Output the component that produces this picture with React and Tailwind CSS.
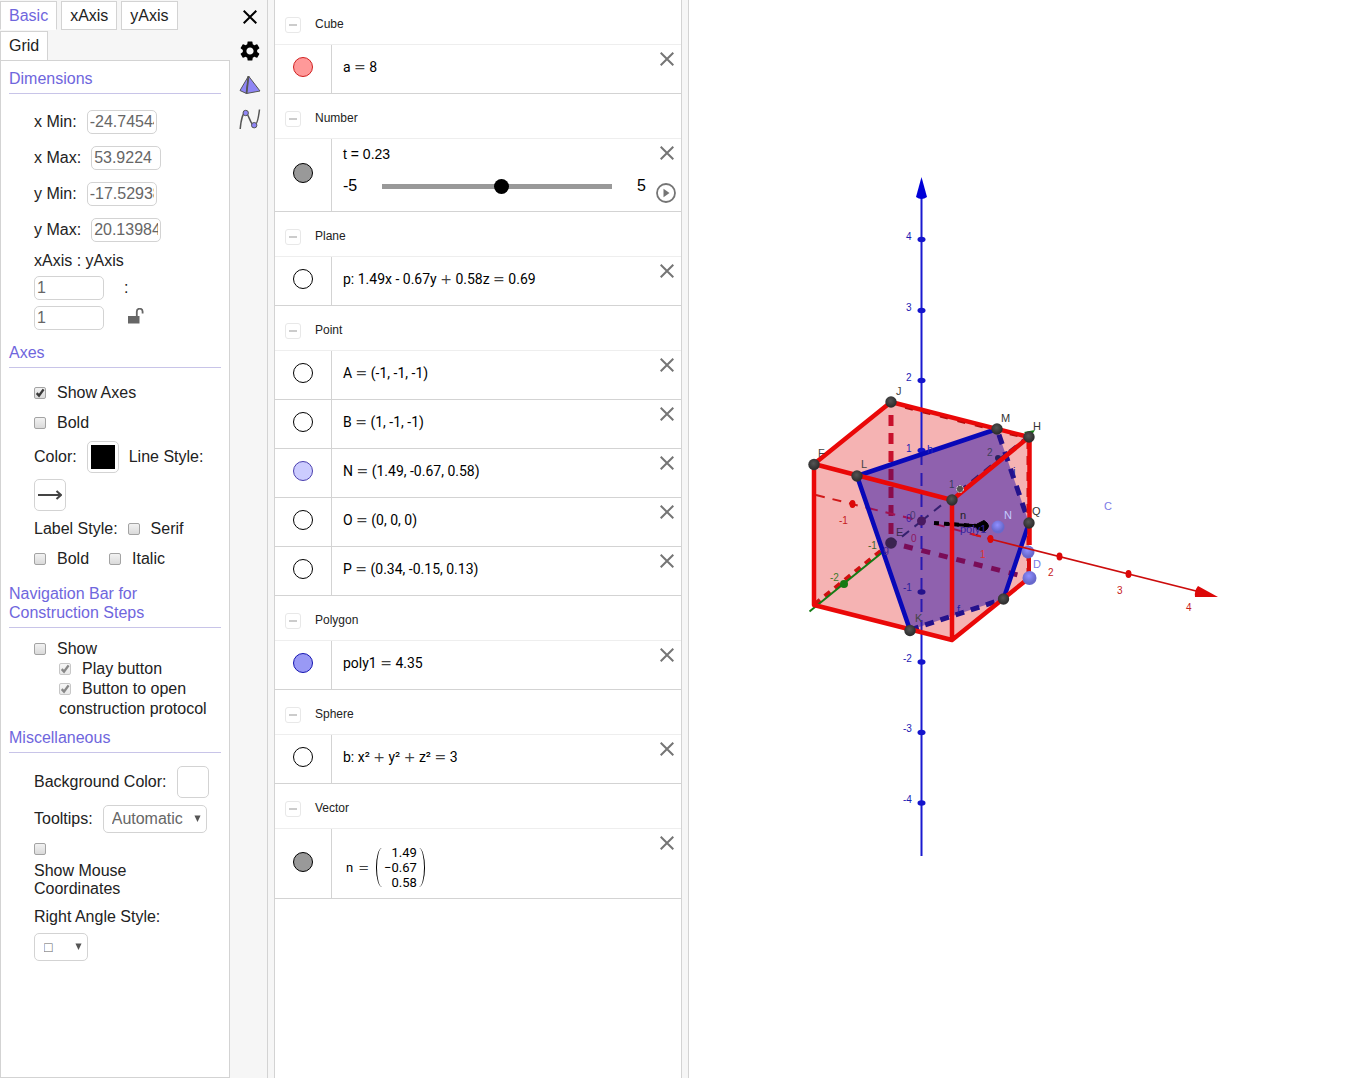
import React, { useState } from "react";
import { MdSettings } from "react-icons/md";

const MATH = "font-[Roboto,sans-serif]";

function Cross({ className, width = 2 }) {
  return (
    <svg viewBox="0 0 14 14" className={className} stroke="currentColor" strokeWidth={width} fill="none" aria-hidden="true">
      <path d="M0.7 0.7 13.3 13.3M13.3 0.7 0.7 13.3" />
    </svg>
  );
}

function Check({ id, label, defaultChecked = false, disabled = false, className = "" }) {
  return (
    <label htmlFor={id} className={`${className} inline-flex items-center gap-[11px]`}>
      <span className={`grid shrink-0 ${disabled ? "opacity-60" : ""}`}>
        <input
          id={id}
          type="checkbox"
          defaultChecked={defaultChecked}
          disabled={disabled}
          className="peer col-start-1 row-start-1 size-3 appearance-none rounded-[2px] border border-[#a3a3a3] bg-linear-to-b from-[#f2f2f2] to-[#dadada]"
        />
        <svg viewBox="0 0 12 12" className="pointer-events-none invisible col-start-1 row-start-1 size-3 peer-checked:visible" fill="none" stroke="#3a3a3a" strokeWidth="2.4" aria-hidden="true">
          <path d="M2.7 6.2 5 8.6 9.6 2.4" />
        </svg>
      </span>
      <span>{label}</span>
    </label>
  );
}

const INPUT = "h-6 w-[70px] rounded-[5px] border border-[#d3d3d3] bg-white px-[2px] text-base text-[#666] outline-none";

function Field({ id, label, value }) {
  return (
    <div className="flex items-center gap-[10px]">
      <label htmlFor={id}>{label}</label>
      <input id={id} defaultValue={value} className={INPUT} />
    </div>
  );
}

function Heading({ children }) {
  return <h2 className="border-b border-[#c8c4e8] pt-2 pb-[5px] leading-[19px] text-[#6f66dd]">{children}</h2>;
}

function Arrow() {
  return (
    <svg viewBox="0 0 8 8" className="pointer-events-none col-start-1 row-start-1 mr-[6px] mb-[2px] size-[7px] self-center justify-self-end" fill="#555" aria-hidden="true">
      <path d="M0.5 0.5h7L4 8z" />
    </svg>
  );
}

const SELECT = "col-start-1 row-start-1 h-7 appearance-none rounded-[5px] border border-[#d3d3d3] bg-white px-2 text-[#666]";
const SWATCH = "flex size-8 shrink-0 items-center justify-center rounded-[5px] border border-[#d3d3d3] bg-white";

function Settings() {
  const tabs = ["Basic", "xAxis", "yAxis", "Grid"];
  const [tab, setTab] = useState("Basic");
  return (
    <section className="flex w-[230px] shrink-0 flex-col">
      <nav className="flex flex-wrap">
        {tabs.map((t) => (
          <button
            key={t}
            type="button"
            onClick={() => setTab(t)}
            className={`${t === tab ? "border-b-white text-[#6f66dd]" : "text-[#222]"} mt-px mr-1 h-[29px] border border-[#d3d3d3] bg-white px-2 leading-5 last:border-b-0`}
          >
            {t}
          </button>
        ))}
      </nav>
      <div className="flex-1 border border-[#d3d3d3] bg-white px-2">
        <Heading>Dimensions</Heading>
        <div className="pt-4 pb-[5px] pl-[25px]">
          <div className="flex flex-col gap-3">
            <Field id="xmin" label="x Min:" value="-24.74544" />
            <Field id="xmax" label="x Max:" value="53.9224" />
            <Field id="ymin" label="y Min:" value="-17.52938" />
            <Field id="ymax" label="y Max:" value="20.13984" />
          </div>
          <label htmlFor="rx" className="mt-[9px] block leading-5">xAxis : yAxis</label>
          <div className="mt-[5px] flex items-center gap-5">
            <input id="rx" defaultValue="1" className={INPUT} />
            <span>:</span>
          </div>
          <div className="mt-[6px] flex items-center gap-6">
            <input aria-label="yAxis ratio" defaultValue="1" className={INPUT} />
            <button type="button" aria-label="Unlock ratio" className="pb-1">
              <svg viewBox="0 0 16 16" className="size-4" aria-hidden="true">
                <path d="M0 8h11.500v7.500H0z" fill="#666" />
                <path d="M8.800 8V3.600a2.900 2.900 0 0 1 5.800 0V5.600" fill="none" stroke="#666" strokeWidth="1.800" />
              </svg>
            </button>
          </div>
        </div>

        <Heading>Axes</Heading>
        <div className="pt-[10px] pb-[2px] pl-[25px]">
          <div className="flex h-[30px] items-center"><Check id="axes" label="Show Axes" defaultChecked /></div>
          <div className="flex h-[30px] items-center"><Check id="bold" label="Bold" /></div>
          <div className="flex flex-wrap items-center gap-x-[10px] gap-y-[6px] pt-[3px] pb-[3px]">
            <span>Color:</span>
            <button type="button" aria-label="Axis color" className={SWATCH}><span className="size-6 bg-black" /></button>
            <span>Line Style:</span>
            <button type="button" aria-label="Line style" className={SWATCH}>
              <svg viewBox="0 0 24 10" className="h-[10px] w-6" fill="none" stroke="#444" strokeWidth="2" aria-hidden="true">
                <path d="M0 5h23M18.500 1 23 5l-4.500 4" />
              </svg>
            </button>
          </div>
          <div className="flex h-[30px] items-center gap-[10px]"><span>Label Style:</span><Check id="serif" label="Serif" /></div>
          <div className="flex h-[30px] items-center gap-5"><Check id="lbold" label="Bold" /><Check id="italic" label="Italic" /></div>
        </div>

        <Heading>Navigation Bar for Construction Steps</Heading>
        <div className="pt-[11px] pb-px pl-[25px] leading-5">
          <Check id="show" label="Show" className="h-5 align-top" />
          <div className="pl-[25px]">
            <Check id="play" label="Play button" defaultChecked disabled className="h-5 align-top" />
            <Check id="open" label="Button to open" defaultChecked disabled className="h-5 align-top" />
            <label htmlFor="open" className="block">construction protocol</label>
          </div>
        </div>

        <Heading>Miscellaneous</Heading>
        <div className="pt-[13px] pl-[25px]">
          <div className="flex items-center gap-[10px]">
            <span className="whitespace-nowrap">Background Color:</span>
            <button type="button" aria-label="Background color" className={SWATCH} />
          </div>
          <div className="mt-[7px] flex items-center gap-[10px]">
            <label htmlFor="tips">Tooltips:</label>
            <div className="grid">
              <select id="tips" className={`${SELECT} w-[104px] text-base`}><option>Automatic</option><option>On</option><option>Off</option></select>
              <Arrow />
            </div>
          </div>
          <input id="mouse" type="checkbox" className="mt-[10px] block size-3 appearance-none rounded-[2px] border border-[#a3a3a3] bg-linear-to-b from-[#f2f2f2] to-[#dadada]" />
          <label htmlFor="mouse" className="mt-[7px] block w-[120px] leading-[18px]">Show Mouse Coordinates</label>
          <label htmlFor="angle" className="mt-[9px] block leading-5">Right Angle Style:</label>
          <div className="mt-[6px] grid w-[54px]">
            <select id="angle" className={`${SELECT} w-[54px] pl-[9px] text-sm`}><option>□</option><option>∟</option><option>•</option></select>
            <Arrow />
          </div>
        </div>
      </div>
    </section>
  );
}

function IconBar() {
  return (
    <aside className="flex w-[38px] shrink-0 flex-col items-center gap-3 border-r border-[#d3d3d3] pt-[6px] pl-[2px] text-black">
      <button type="button" aria-label="Close" className="flex size-[22px] items-center justify-center"><Cross className="size-[14px]" /></button>
      <button type="button" aria-label="Settings" className="flex size-[22px] items-center justify-center"><MdSettings className="size-6 shrink-0" /></button>
      <button type="button" aria-label="Objects" className="flex size-[22px] items-center justify-center">
        <svg viewBox="0 0 22 20" className="h-5 w-[22px]" stroke="#555" strokeWidth="1" strokeLinejoin="round" aria-hidden="true">
          <path d="M9.500 1 1 15.500 7.500 18.500z" fill="#8f86f5" /><path d="M9.500 1 7.500 18.500 21 16z" fill="#8f86f5" /><path d="M9.500 1 7.500 18.500" strokeWidth="1.800" />
        </svg>
      </button>
      <button type="button" aria-label="Graph" className="flex size-[22px] items-center justify-center">
        <svg viewBox="0 0 22 22" className="size-[22px]" fill="none" stroke="#555" strokeWidth="1.500" aria-hidden="true">
          <path d="M1.200 21C2 12 4 4.500 6.500 4.500 9.500 4.500 11.500 17.500 15 17.500 18 17.500 19.500 10 20.500 1.500" />
          <circle cx="6.700" cy="5" r="2.700" fill="#8f86f5" strokeWidth="1" /><circle cx="15.200" cy="17.200" r="2.700" fill="#8f86f5" strokeWidth="1" />
        </svg>
      </button>
    </aside>
  );
}

const groups = [
  { name: "Cube", items: [{ text: "a = 8", dot: "border-[#d02020] bg-[#ff9999]" }] },
  { name: "Number", items: [{ slider: true }] },
  { name: "Plane", items: [{ text: "p: 1.49x - 0.67y + 0.58z = 0.69", dot: "border-black bg-white" }] },
  {
    name: "Point",
    items: [
      { text: "A = (-1, -1, -1)", dot: "border-black bg-white" },
      { text: "B = (1, -1, -1)", dot: "border-black bg-white" },
      { text: "N = (1.49, -0.67, 0.58)", dot: "border-[#4a3fae] bg-[#ccccff]" },
      { text: "O = (0, 0, 0)", dot: "border-black bg-white" },
      { text: "P = (0.34, -0.15, 0.13)", dot: "border-black bg-white" },
    ],
  },
  { name: "Polygon", items: [{ text: "poly1 = 4.35", dot: "border-[#1515b0] bg-[#9999f5]" }] },
  { name: "Sphere", items: [{ text: "b: x² + y² + z² = 3", dot: "border-black bg-white" }] },
  { name: "Vector", items: [{ vector: true }] },
];

function Formula({ text }) {
  return text.split(/([=+])/).map((part, i) =>
    part === "=" || part === "+" ? <span key={i} className="font-['DejaVu_Sans',sans-serif] text-[#444]">{part}</span> : part
  );
}

function Row({ pad, dot, children }) {
  return (
    <li className="flex border-b border-[#d3d3d3]">
      <div className={`${pad} flex w-[57px] shrink-0 justify-center border-r border-[#d3d3d3]`}>
        <button type="button" aria-label="Toggle visibility" className={`${dot} size-5 rounded-full border`} />
      </div>
      <div className="min-w-0 flex-1 pl-[11px]">{children}</div>
      <button type="button" aria-label="Delete" className="mt-[7px] mr-[7px] size-[14px] shrink-0 text-[#757575]"><Cross className="size-[14px]" /></button>
    </li>
  );
}

function Item({ item }) {
  if (item.slider)
    return (
      <li className="flex border-b border-[#d3d3d3]">
        <div className="flex w-[57px] shrink-0 justify-center border-r border-[#d3d3d3] pt-6">
          <button type="button" aria-label="Toggle visibility" className="size-5 rounded-full border border-black bg-[#999]" />
        </div>
        <div className="min-w-0 flex-1 pt-[6px] pb-4 pl-[11px] text-black">
          <label htmlFor="t" className="block text-sm leading-[18px]">t = 0.23</label>
          <div className="mt-[14px] flex items-center text-base leading-[18px]">
            <span className="w-[39px]">-5</span>
            <input
              id="t"
              type="range"
              min="-5"
              max="5"
              step="0.01"
              defaultValue="0.23"
              className="h-[15px] min-w-0 flex-1 appearance-none bg-transparent [&::-webkit-slider-runnable-track]:h-[5px] [&::-webkit-slider-runnable-track]:bg-[#999] [&::-webkit-slider-thumb]:-mt-[5px] [&::-webkit-slider-thumb]:size-[15px] [&::-webkit-slider-thumb]:appearance-none [&::-webkit-slider-thumb]:rounded-full [&::-webkit-slider-thumb]:bg-black"
            />
            <span className="w-[34px] text-right">5</span>
          </div>
        </div>
        <div className="flex w-[35px] shrink-0 flex-col items-end pt-[7px] pr-[5px] text-[#757575]">
          <button type="button" aria-label="Delete" className="mr-[2px] size-[14px]"><Cross className="size-[14px]" /></button>
          <button type="button" aria-label="Play" className="mt-[23px] size-5">
            <svg viewBox="0 0 20 20" className="size-5" aria-hidden="true"><circle cx="10" cy="10" r="9" fill="none" stroke="currentColor" strokeWidth="1.800" /><path d="M7.500 5.800v8.400l6-4.200z" fill="currentColor" /></svg>
          </button>
        </div>
      </li>
    );
  if (item.vector)
    return (
      <Row pad="pt-[23px]" dot="border-black bg-[#999]">
        <div className={`${MATH} flex h-[69px] items-center pt-2 pl-[3px] text-[13px] text-black`}>
          <span>n</span>
          <span className="px-[5px] font-['DejaVu_Sans',sans-serif] text-[#444]">=</span>
          <div className="flex items-center">
            <span className="ml-[2px] h-[39px] w-[6px] rounded-l-[100%_50%] border-l border-black" />
            <span className="flex flex-col px-[2px] text-right leading-[15px]"><span>1.49</span><span>−0.67</span><span>0.58</span></span>
            <span className="h-[39px] w-[6px] rounded-r-[100%_50%] border-r border-black" />
          </div>
        </div>
      </Row>
    );
  return (
    <Row pad="pt-3" dot={item.dot}>
      <p className={`${MATH} h-12 pt-3 text-sm leading-5 text-black`}><Formula text={item.text} /></p>
    </Row>
  );
}

function Algebra() {
  return (
    <main className="w-[408px] shrink-0 border-x border-[#d3d3d3] bg-white">
      {groups.map((g) => (
        <section key={g.name}>
          <header className="flex h-[45px] items-center gap-[14px] border-b border-[#eee] pt-1 pl-[10px]">
            <button type="button" aria-label={`Collapse ${g.name}`} className="mt-px flex size-4 items-center justify-center rounded-[3px] border border-[#e8e8e8]">
              <span className="h-[2px] w-2 bg-[#ccc]" />
            </button>
            <h3 className="text-[12px] text-[#222]">{g.name}</h3>
          </header>
          <ul>{g.items.map((it, i) => <Item key={i} item={it} />)}</ul>
        </section>
      ))}
    </main>
  );
}

const labels = [
  ["4", 906, 240, "#1c1cb4"], ["3", 906, 311, "#1c1cb4"], ["2", 906, 381, "#1c1cb4"], ["1", 906, 452, "#1c1cb4"],
  ["0", 906, 522, "#3a22a8"], ["-1", 903, 591, "#2a1c9c"], ["-2", 903, 662, "#1c1cb4"], ["-3", 903, 732, "#1c1cb4"], ["-4", 903, 803, "#1c1cb4"],
  ["-1", 839, 524, "#c62020"], ["0", 911, 542, "#8c1860"], ["1", 980, 558, "#e03030"], ["2", 1048, 576, "#c62020"], ["3", 1117, 594, "#c62020"], ["4", 1186, 611, "#c62020"],
  ["-2", 830, 581, "#3d7a2a"], ["-1", 868, 549, "#3d6030"], ["0", 910, 519, "#4a3a70"], ["1", 949, 488, "#3a3a5c"], ["2", 987, 456, "#40405c"],
];
const names = [
  ["J", 896, 395, "#444"], ["F", 818, 457, "#444"], ["L", 861, 468, "#444"], ["M", 1001, 422, "#333"], ["H", 1033, 430, "#333"],
  ["Q", 1032, 515, "#333"], ["E", 896, 536, "#3b2b50"], ["K", 915, 622, "#444"], ["D", 1033, 568, "#7a7ae6"], ["C", 1104, 510, "#7a7ae6"],
  ["h", 927, 453, "#2222b8"], ["i", 1013, 475, "#2222a8"], ["f", 957, 613, "#2222a8"], ["g", 883, 553, "#4a2a90"], ["n", 960, 519, "#222"], ["poly1", 960, 533, "#3322a0"], ["N", 1004, 519, "#c4ccff"],
];

function Scene() {
  return (
    <svg viewBox="689 0 658 1078" className="h-full w-full" fontFamily="'Liberation Sans', Arial, sans-serif" role="img" aria-label="Cube cut by a plane">
      <defs>
        <radialGradient id="dark" cx="45%" cy="40%"><stop offset="0" stopColor="#555" /><stop offset="1" stopColor="#303030" /></radialGradient>
        <radialGradient id="light" cx="45%" cy="35%"><stop offset="0" stopColor="#9090ff" /><stop offset="1" stopColor="#6868cc" /></radialGradient>
      </defs>
      <path d="M891 402 1029 437 1029 578 952 640 814 605 814 464z" fill="#f5b3b3" />
      <path d="M921.500 196V450M921.500 634V856" stroke="#1a1ad0" strokeWidth="2" />
      <path d="M921.500 177 927 197Q921.500 201 916 197z" fill="#0000d8" />
      <path d="M891 415V465" stroke="#c8102c" strokeWidth="5" strokeDasharray="11 7" />
      <path d="M891 543 814 605" stroke="#d01010" strokeWidth="4.500" strokeDasharray="7 6" />
      <path d="M857 476 997 429 1029 523 1003.500 599 910 630z" fill="#8f61ae" />
      <path d="M891 469V534" stroke="#8a0c4c" strokeWidth="5" strokeDasharray="11 7" />
      <path d="M904 546 1022 576" stroke="#7a0c58" strokeWidth="5" strokeDasharray="9 9" />
      <path d="M921.500 452V630" stroke="#2a1ab0" strokeWidth="2" strokeDasharray="13 8" />
      <path d="M816 495 868 508" stroke="#d01818" strokeWidth="2" strokeDasharray="9 8" />
      <path d="M868 508 921 521M935 524 990 539" stroke="#a01250" strokeWidth="2" strokeDasharray="10 8" />
      <path d="M972 534 981 536.500" stroke="#dc1414" strokeWidth="2" />
      <path d="M921.500 521 1029 435M921.500 521 884 551" stroke="#352070" strokeWidth="2" strokeDasharray="9 7" />
      <path d="M809.500 611.500 884 551" stroke="#147a14" strokeWidth="2" />
      <path d="M1024 432 1035 430 1030 438z" fill="#147a14" />
      <path d="M997 429 1029 523" stroke="#24128c" strokeWidth="5" strokeDasharray="10 8" strokeDashoffset="-6" />
      <path d="M910 630 1003.500 599" stroke="#24128c" strokeWidth="5" strokeDasharray="9 7" />
      <path d="M1028 440V578" stroke="#c81010" strokeWidth="3" strokeDasharray="9 7" />
      <circle cx="891" cy="543" r="5.800" fill="#3a2350" />
      <circle cx="921.500" cy="521" r="4.500" fill="#4a1a60" />
      <path d="M934 523 978 526" stroke="#000" strokeWidth="4" strokeDasharray="5 5" />
      <path d="M946 524 980 526" stroke="#000" strokeWidth="3" strokeDasharray="9 2" />
      <path d="M977 524 984 520.500Q993 526 984 531.500L977 529z" fill="#000" stroke="#000" strokeWidth="1" strokeLinejoin="round" />
      <g fill="#1414cc">
        {[239.5, 310.5, 380.5, 450.5, 662, 732.5, 803].map((y) => <ellipse key={y} cx="921.500" cy={y} rx="4" ry="2.700" />)}
        <ellipse cx="921.500" cy="592" rx="4" ry="2.700" fill="#24128c" />
      </g>
      <circle cx="844" cy="584" r="4" fill="#147a14" />
      <circle cx="998" cy="458" r="3" fill="#282060" />
      <path d="M857 476 997 429M857 476 910 630M1029 523 1003.500 599" stroke="#0808b8" strokeWidth="4.500" strokeLinecap="round" />
      <path d="M891 402 1029 437 952 500 814 464zM814 464V605L952 640 1029 578M952 500V640M1029.500 437V545" fill="none" stroke="#ea0808" strokeWidth="4.500" strokeLinejoin="round" />
      <path d="M905 408 1020 437" stroke="#b80808" strokeWidth="1.500" strokeDasharray="8 10" />
      <path d="M1029 555V578" stroke="#d80c0c" strokeWidth="4" />
      <circle cx="960" cy="489" r="3.500" fill="#555" stroke="#ddd" strokeDasharray="2 1" />
      <g fill="url(#light)"><circle cx="998" cy="527" r="6.500" /><circle cx="1028" cy="552" r="6.500" /><circle cx="1029.500" cy="578" r="7" /></g>
      <path d="M990 539 1200 592" stroke="#cc0c0c" strokeWidth="1.800" />
      <path d="M1198 586 1218 597 1195 597Q1194 591 1198 586z" fill="#dc0808" />
      <g fill="#dc0808">
        <ellipse cx="852.500" cy="504" rx="3" ry="4" /><ellipse cx="990.500" cy="539" rx="3" ry="4" /><ellipse cx="1059.500" cy="556.500" rx="3" ry="4" /><ellipse cx="1128.500" cy="574" rx="3" ry="4" />
      </g>
      <g fill="url(#dark)">
        {[[891, 402], [814, 464.5], [857, 476], [997, 429], [1029, 437], [952, 500], [1029, 523], [1003.5, 599], [910, 630.5]].map(([x, y]) => <circle key={`${x}-${y}`} cx={x} cy={y} r="5.700" />)}
      </g>
      <g fontSize="10">{labels.map(([t, x, y, c], i) => <text key={i} x={x} y={y} fill={c}>{t}</text>)}</g>
      <g fontSize="11">{names.map(([t, x, y, c], i) => <text key={i} x={x} y={y} fill={c}>{t}</text>)}</g>
    </svg>
  );
}

export default function App() {
  return (
    <div className="min-h-screen bg-white pb-[2px] font-['Liberation_Sans',Arial,sans-serif] text-base text-[#222]">
      <div className="flex min-h-[calc(100vh-2px)] bg-[#f6f6f6]">
        <Settings />
        <IconBar />
        <div className="ml-[6px] flex min-w-0 flex-1 gap-[6px]">
          <Algebra />
          <div className="min-w-0 flex-1 border-l border-[#d3d3d3] bg-white"><Scene /></div>
        </div>
      </div>
    </div>
  );
}
